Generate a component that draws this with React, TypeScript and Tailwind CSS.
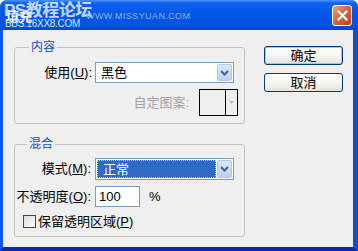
import React from "react";

function Chevron() {
  return (
    <svg width="9" height="6" viewBox="0 0 9 6">
      <path d="M1 1 L4.5 4.5 L8 1" fill="none" stroke="#4d6185" strokeWidth="2" />
    </svg>
  );
}

function DropArrow() {
  return (
    <div className="w-[15px] my-[1px] mr-[1px] flex items-center justify-center rounded-[2px] border border-[#b4c6f2] bg-[linear-gradient(to_bottom,#dde7fd,#bcd0fa)]">
      <Chevron />
    </div>
  );
}

function XPButton({ children, def }: { children: React.ReactNode; def?: boolean }) {
  return (
    <div
      className={
        "w-[79px] h-[19px] rounded-[3px] border border-[#003c74] bg-[linear-gradient(to_bottom,#ffffff,#f3f3ef_60%,#e2e2da)] flex items-center justify-center text-[13px] leading-none " +
        (def ? "shadow-[inset_0_0_0_1px_#a9c1ec]" : "")
      }
    >
      {children}
    </div>
  );
}

export default function App() {
  return (
    <div className="w-[358px] h-[251px] flex flex-col overflow-hidden rounded-t-[7px] bg-[#0054e3] font-['Liberation_Sans','Noto_Sans_CJK_SC',sans-serif] text-[13px] text-black">
      {/* Title bar */}
      <div className="relative h-[30px] shrink-0 flex items-center justify-between pl-[6px] pr-[6px] bg-[linear-gradient(to_bottom,#4a95ff_0%,#0f62ee_10%,#0057e6_45%,#0053e1_85%,#0047d0_100%)]">
        <span className="text-white font-bold text-[13px] leading-none mt-[2px]">填充</span>
        <span className="absolute left-[4px] top-[2px] text-[17px] leading-none font-bold tracking-[-0.5px] text-[#e3ecff] opacity-85">PS教程论坛</span>
        <span className="absolute left-[5px] top-[19px] text-[10px] leading-none tracking-[-0.3px] text-[#dbe6ff]">BBS.16XX8.COM</span>
        <span className="absolute left-[86px] top-[12px] text-[9px] leading-none tracking-[0.4px] text-[#8fb4ff]">WWW.MISSYUAN.COM</span>
        <div className="w-[20px] h-[21px] mt-[1px] rounded-[3px] border border-white bg-[linear-gradient(to_bottom_right,#f0a389,#d9603a_50%,#c3421c)] flex items-center justify-center">
          <svg width="11" height="11" viewBox="0 0 11 11">
            <path d="M1.5 1.5 L9.5 9.5 M9.5 1.5 L1.5 9.5" stroke="white" strokeWidth="2.2" strokeLinecap="square" />
          </svg>
        </div>
      </div>

      {/* Body */}
      <div className="flex-1 flex items-start border-l-[3px] border-r-[5px] border-b-[4px] border-l-[#0a56e6] border-r-[#0a4fdc] border-b-[#0a2bb0] bg-[#efefef] pl-[11px]">
        {/* Left column */}
        <div className="w-[231px] mt-[10px] flex flex-col">
          <fieldset className="h-[84px] border border-[#c2c2c2] rounded-[3px]">
            <legend className="ml-[14px] px-[2px] text-[12px] leading-[14px] text-[#1d47c9]">内容</legend>
            <div className="mt-[8px] flex items-center">
              <div className="w-[80px] pr-[3px] text-right leading-[21px]">
                使用(<span className="underline">U</span>):
              </div>
              <div className="w-[139px] h-[21px] border border-[#7f9db9] bg-white flex">
                <div className="flex-1 flex items-center pl-[5px] leading-none">黑色</div>
                <DropArrow />
              </div>
            </div>
            <div className="mt-[6px] flex items-center justify-end pr-[6px]">
              <span className="text-[#a3a3a3] mr-[10px] leading-none">自定图案:</span>
              <div className="w-[39px] h-[27px] border border-black bg-[#efefef] flex">
                <div className="flex-1 border-r border-black"></div>
                <div className="w-[11px] flex items-center justify-center">
                  <svg width="5" height="3" viewBox="0 0 5 3">
                    <path d="M0 0 H5 L2.5 3 Z" fill="#b5b5b5" />
                  </svg>
                </div>
              </div>
            </div>
          </fieldset>

          <fieldset className="mt-[13px] h-[100px] border border-[#c2c2c2] rounded-[3px]">
            <legend className="ml-[12px] px-[2px] text-[12px] leading-[14px] text-[#1d47c9]">混合</legend>
            <div className="mt-[7px] flex items-center">
              <div className="w-[80px] pr-[4px] text-right leading-[22px]">
                模式(<span className="underline">M</span>):
              </div>
              <div className="w-[139px] h-[22px] border border-[#7f9db9] bg-white flex">
                <div className="flex-1 p-[1px] flex">
                  <div className="flex-1 bg-[#316ac5] border border-dotted border-[#d9c985] text-white flex items-center pl-[5px] leading-none">
                    正常
                  </div>
                </div>
                <DropArrow />
              </div>
            </div>
            <div className="mt-[6px] flex items-center">
              <div className="w-[80px] pr-[4px] text-right leading-[21px] whitespace-nowrap">
                不透明度(<span className="underline">O</span>):
              </div>
              <div className="w-[45px] h-[21px] border border-[#7f9db9] bg-white flex items-center pl-[3px] leading-none">100</div>
              <span className="ml-[9px] leading-none">%</span>
            </div>
            <div className="mt-[8px] flex items-center pl-[8px]">
              <div className="w-[13px] h-[13px] border border-[#1c5180] bg-[linear-gradient(to_bottom_right,#dcdcd7,#ffffff)]"></div>
              <span className="ml-[2px] leading-none">
                保留透明区域(<span className="underline">P</span>)
              </span>
            </div>
          </fieldset>
        </div>

        {/* Right column */}
        <div className="ml-[19px] mt-[16px] flex flex-col gap-[8px]">
          <XPButton def>确定</XPButton>
          <XPButton>取消</XPButton>
        </div>
      </div>
    </div>
  );
}
